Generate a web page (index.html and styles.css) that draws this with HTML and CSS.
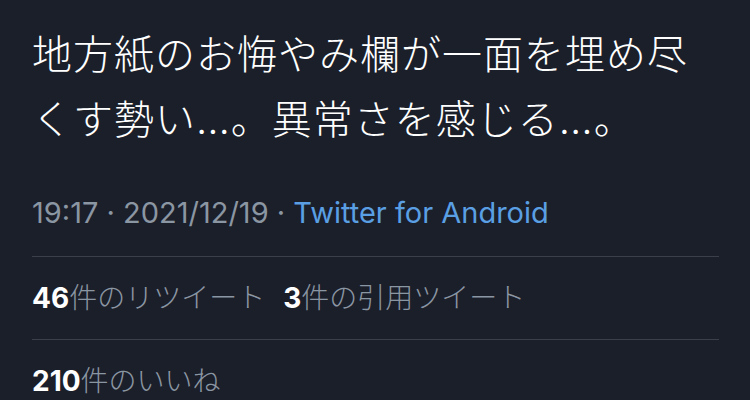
FILE: index.html
```html
<!DOCTYPE html>
<html lang="ja">
<head>
    <meta charset="UTF-8">
    <meta name="viewport" content="width=device-width, initial-scale=1.0">
    <title>ツイート</title>
    <link rel="stylesheet" href="styles.css">
</head>
<body>
    <div class="tweet">
        <p class="tweet-text">地方紙のお悔やみ欄が一面を埋め尽くす勢い…。異常さを感じる…。</p>

        <div class="meta">
            <span>19:17</span> · <span>2021/12/19</span> · <a class="source" href="#">Twitter for Android</a>
        </div>

        <!-- Counts -->
        <div class="stats">
            <span class="stat"><b>46</b>件のリツイート</span>
            <span class="stat"><b>3</b>件の引用ツイート</span>
        </div>
        <div class="stats">
            <span class="stat"><b>210</b>件のいいね</span>
        </div>
    </div>
</body>
</html>
```

FILE: styles.css
```css
body {
    margin: 0;
    background: #1b1f2a;
    font-family: Inter, "Noto Sans CJK JP", sans-serif;
    color: #f5f8fa;
}
.tweet {
    padding: 0 31px 0 32px;
}
.tweet-text {
    margin: 22px 0 0;
    font-size: 40px;
    line-height: 65px;
    letter-spacing: 1px;
    font-weight: 300;
    color: #ffffff;
}
.meta {
    margin-top: 41px;
    padding-bottom: 23px;
    border-bottom: 1px solid #3a404b;
    font-size: 29px;
    line-height: 40px;
    color: #8b96a3;
}
.source {
    color: #5a9fe4;
    text-decoration: none;
}
.stats {
    display: flex;
    gap: 18px;
    padding: 21px 0 21px;
    font-size: 28px;
    line-height: 40px;
    color: #8b96a3;
    font-weight: 300;
}
.stats + .stats {
    border-top: 1px solid #3a404b;
    padding-top: 21px;
    padding-bottom: 0;
}
.stat b {
    color: #ffffff;
    font-weight: 700;
}
```
